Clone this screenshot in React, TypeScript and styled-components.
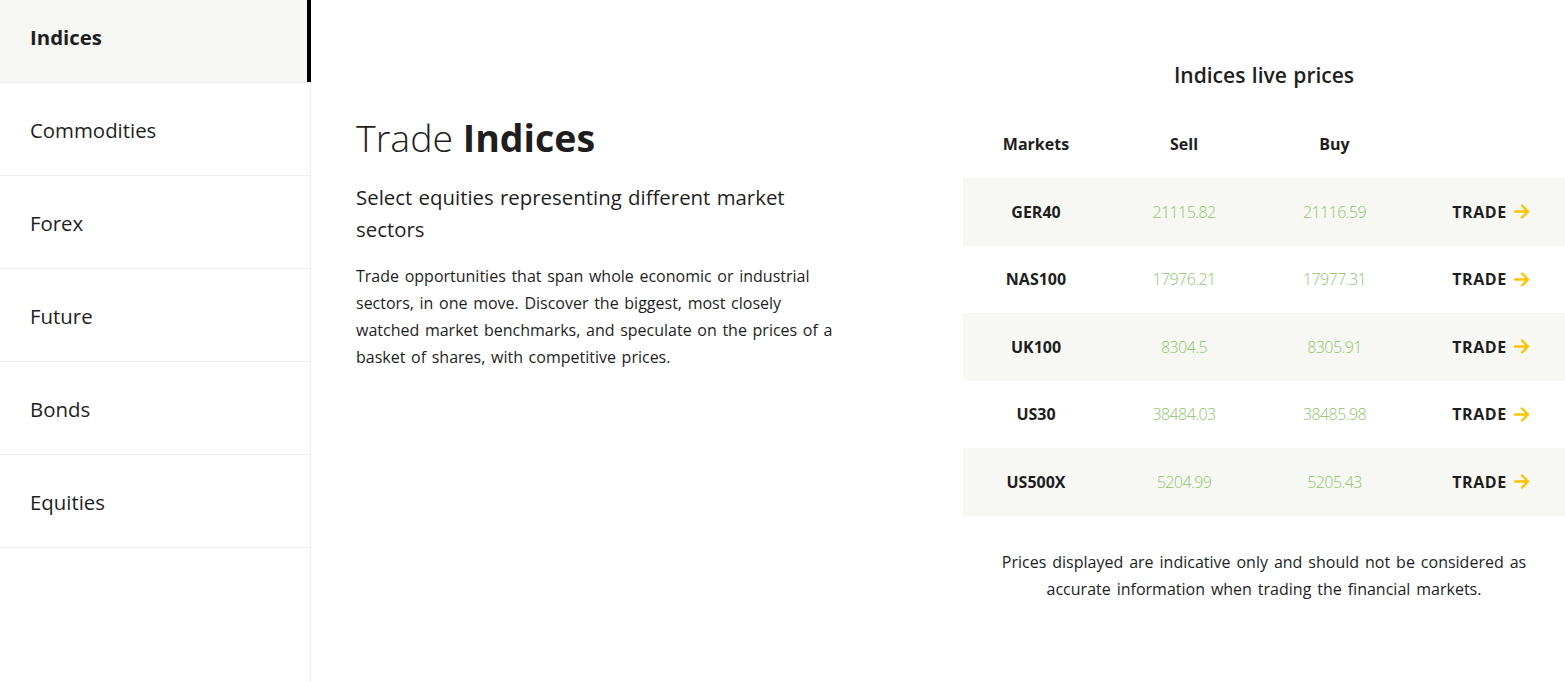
import React from "react";
import styled, { createGlobalStyle } from "styled-components";

const Global = createGlobalStyle`
  html, body { margin: 0; padding: 0; background: #fff; }
  body { font-family: "Open Sans", "Lato", Arial, sans-serif; color: #1e1e1e; }
  * { box-sizing: border-box; }
`;

const Page = styled.div`
  display: flex;
  width: 1565px;
  height: 682px;
  overflow: hidden;
`;

const Sidebar = styled.nav`
  width: 311px;
  flex-shrink: 0;
  border-right: 1px solid #efefef;
  display: flex;
  flex-direction: column;
`;

const NavList = styled.ul`
  list-style: none;
  margin: -10px 0 0 0;
  padding: 0;
`;

const NavItem = styled.li<{ $active?: boolean }>`
  height: 93px;
  display: flex;
  align-items: center;
  padding: 1px 0 0 30px;
  font-size: 20.4px;
  font-weight: ${(p) => (p.$active ? 700 : 400)};
  color: #1e1e1e;
  border-bottom: 1px solid #efefef;
  background: ${(p) => (p.$active ? "#f6f7f3" : "#fff")};
  box-shadow: ${(p) => (p.$active ? "inset -4px 0 0 #000" : "none")};
  margin-right: ${(p) => (p.$active ? "-1px" : "0")};
`;

const Intro = styled.section`
  width: 652px;
  flex-shrink: 0;
  padding: 114px 0 0 45px;
`;

const IntroInner = styled.div`
  width: 490px;
`;

const Heading = styled.h1`
  margin: 0;
  font-size: 37.5px;
  line-height: 48px;
  font-weight: 300;
  color: #1e1e1e;
  b { font-weight: 700; }
`;

const Subtitle = styled.p`
  margin: 19px 0 0 0;
  font-size: 20.4px;
  line-height: 32px;
  font-weight: 400;
  word-spacing: 1px;
`;

const Body = styled.p`
  margin: 18px 0 0 0;
  font-size: 16px;
  line-height: 27px;
  word-spacing: 1.5px;
`;

const Prices = styled.section`
  flex: 1;
  padding-top: 60px;
  display: flex;
  flex-direction: column;
`;

const PricesTitle = styled.h2`
  margin: 0;
  text-align: center;
  font-size: 21px;
  line-height: 30px;
  font-weight: 600;
  word-spacing: 1px;
`;

const Table = styled.div`
  margin-top: 20px;
  display: flex;
  flex-direction: column;
`;

const Row = styled.div<{ $shaded?: boolean; $header?: boolean }>`
  display: grid;
  grid-template-columns: 146px 150px 151px 1fr;
  align-items: center;
  height: ${(p) => (p.$header ? "68px" : "67.5px")};
  background: ${(p) => (p.$shaded ? "#f7f8f4" : "transparent")};
`;

const HeadCell = styled.div`
  text-align: center;
  font-size: 16px;
  font-weight: 700;
`;

const Market = styled.div`
  text-align: center;
  font-size: 16px;
  font-weight: 700;
`;

const Price = styled.div`
  text-align: center;
  font-size: 16px;
  font-weight: 300;
  letter-spacing: -0.6px;
  color: #8dc46b;
`;

const TradeLink = styled.a`
  display: flex;
  align-items: center;
  justify-content: center;
  gap: 7px;
  padding-left: 7px;
  font-size: 16px;
  font-weight: 700;
  letter-spacing: 0.6px;
  color: #1e1e1e;
  text-decoration: none;
`;

const Disclaimer = styled.p`
  margin: 33px 0 0 0;
  text-align: center;
  font-size: 16px;
  line-height: 27px;
  word-spacing: 1.8px;
  padding: 0 15px;
`;

const Arrow = () => (
  <svg width="16" height="15" viewBox="0 0 16 15" fill="none">
    <path d="M1 7.5h13M8 1.5l6 6-6 6" stroke="#fcc300" strokeWidth="2.4" strokeLinecap="round" strokeLinejoin="round" />
  </svg>
);

const navItems = ["Indices", "Commodities", "Forex", "Future", "Bonds", "Equities"];

const rows = [
  { m: "GER40", s: "21115.82", b: "21116.59" },
  { m: "NAS100", s: "17976.21", b: "17977.31" },
  { m: "UK100", s: "8304.5", b: "8305.91" },
  { m: "US30", s: "38484.03", b: "38485.98" },
  { m: "US500X", s: "5204.99", b: "5205.43" },
];

export default function App() {
  return (
    <>
      <Global />
      <Page>
        <Sidebar>
          <NavList>
            {navItems.map((n, i) => (
              <NavItem key={n} $active={i === 0}>
                {n}
              </NavItem>
            ))}
          </NavList>
        </Sidebar>
        <Intro>
          <IntroInner>
            <Heading>
              Trade <b>Indices</b>
            </Heading>
            <Subtitle>Select equities representing different market sectors</Subtitle>
            <Body>
              Trade opportunities that span whole economic or industrial sectors, in one move. Discover the
              biggest, most closely watched market benchmarks, and speculate on the prices of a basket of
              shares, with competitive prices.
            </Body>
          </IntroInner>
        </Intro>
        <Prices>
          <PricesTitle>Indices live prices</PricesTitle>
          <Table>
            <Row $header>
              <HeadCell>Markets</HeadCell>
              <HeadCell>Sell</HeadCell>
              <HeadCell>Buy</HeadCell>
              <div />
            </Row>
            {rows.map((r, i) => (
              <Row key={r.m} $shaded={i % 2 === 0}>
                <Market>{r.m}</Market>
                <Price>{r.s}</Price>
                <Price>{r.b}</Price>
                <TradeLink href="#">
                  TRADE <Arrow />
                </TradeLink>
              </Row>
            ))}
          </Table>
          <Disclaimer>
            Prices displayed are indicative only and should not be considered as accurate information when
            trading the financial markets.
          </Disclaimer>
        </Prices>
      </Page>
    </>
  );
}
